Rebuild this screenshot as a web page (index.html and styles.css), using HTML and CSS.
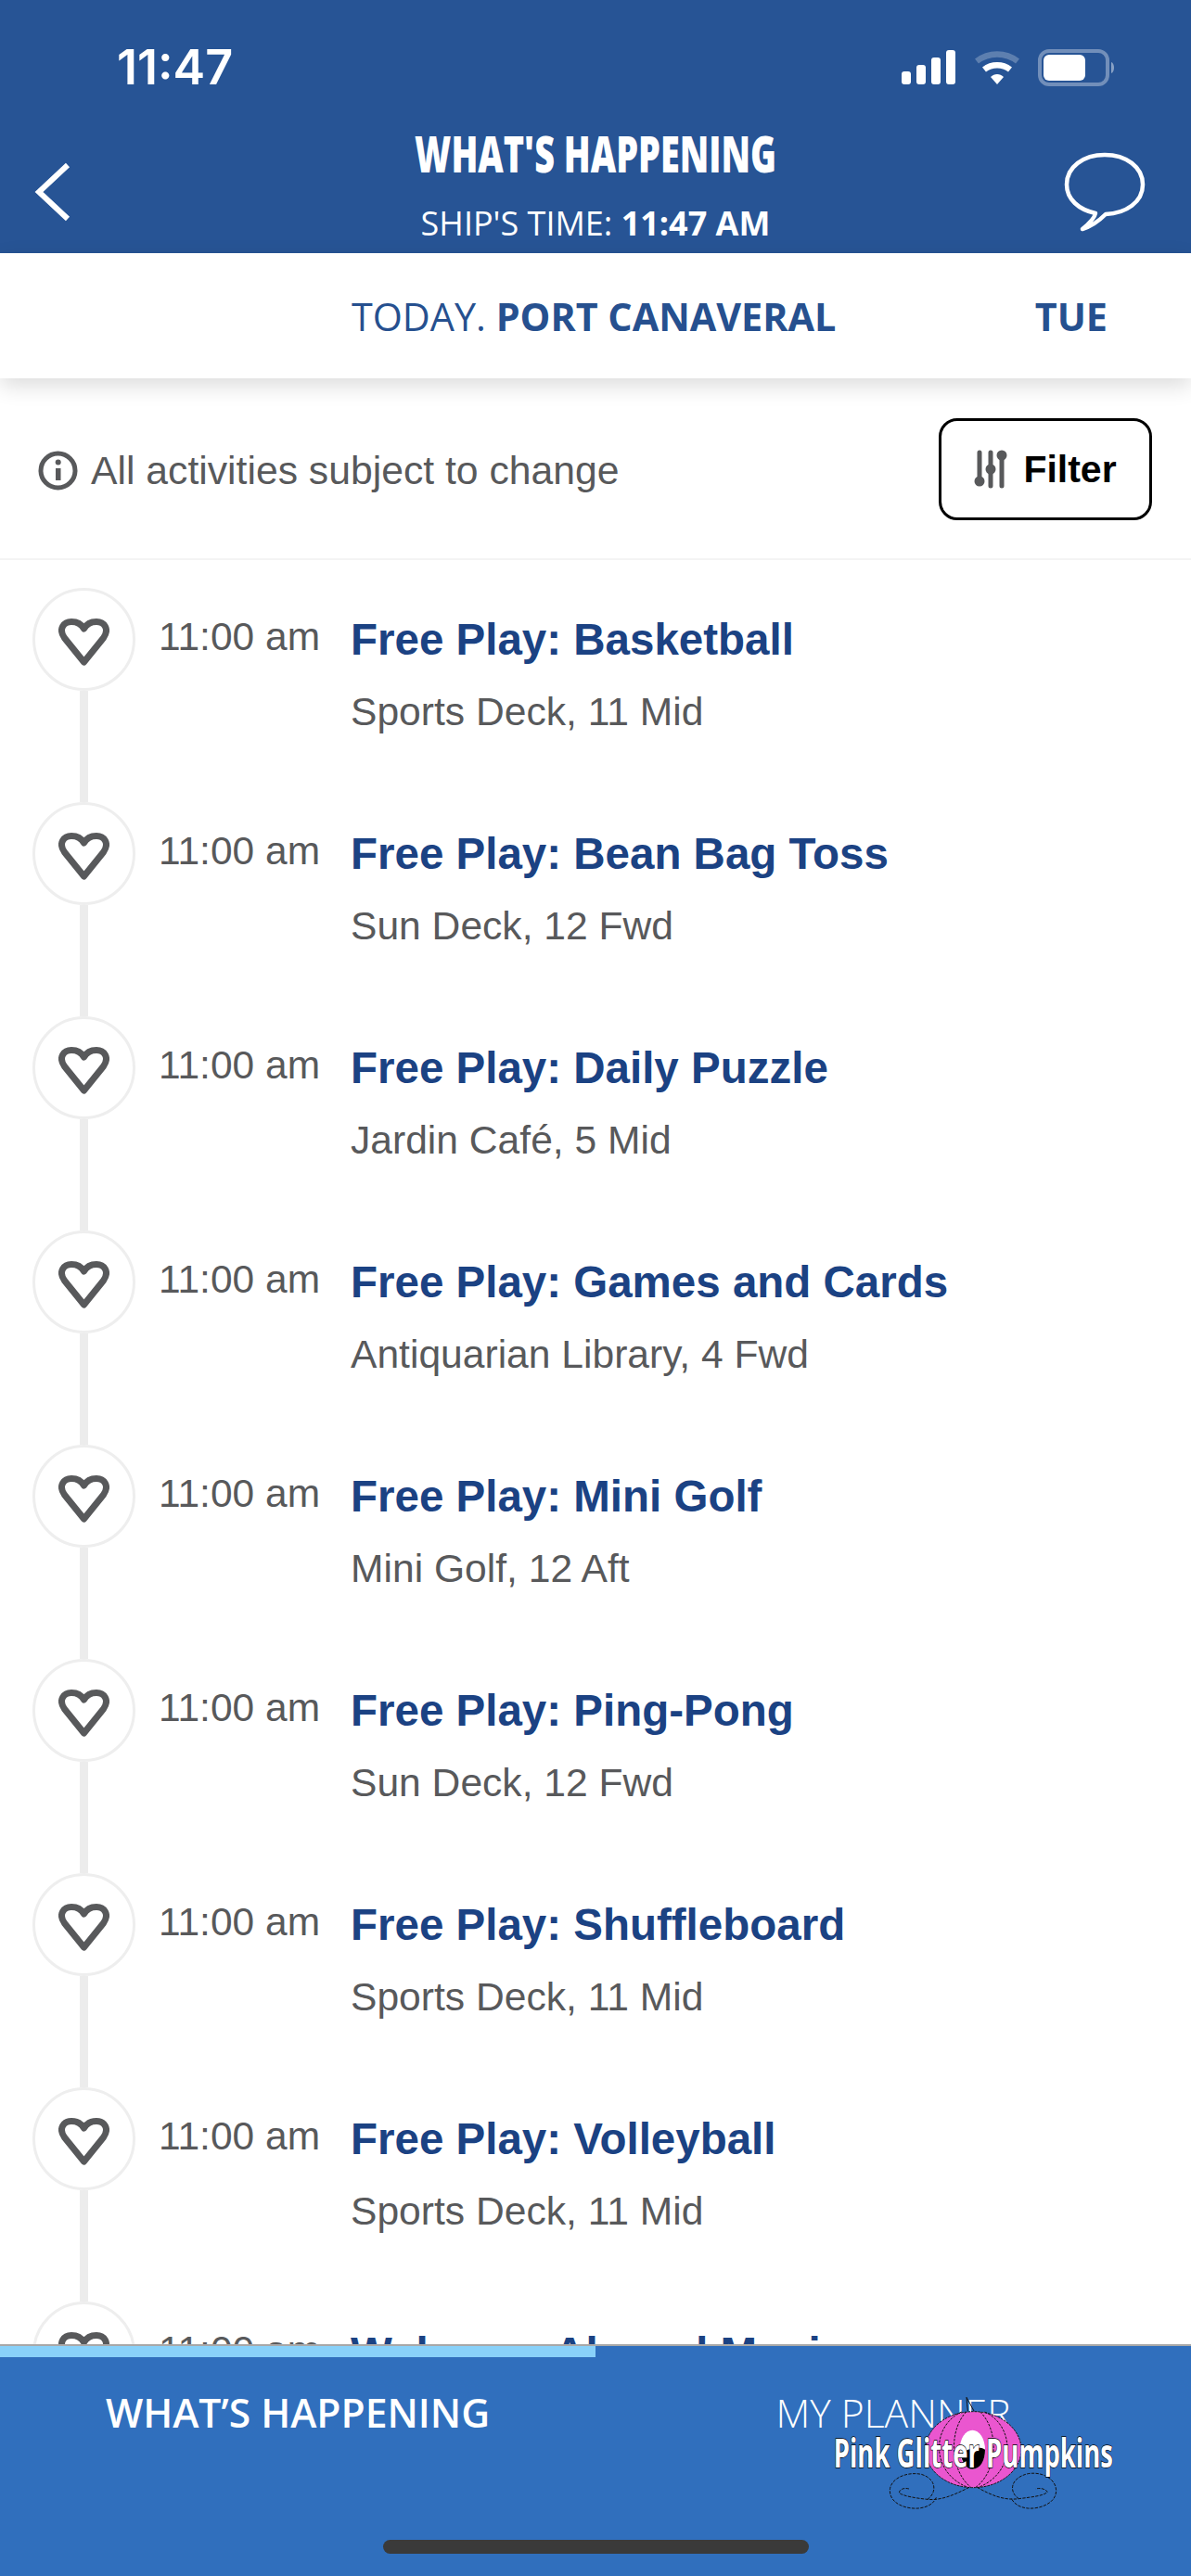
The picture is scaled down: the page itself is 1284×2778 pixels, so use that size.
FILE: index.html
```html
<!DOCTYPE html>
<html lang="en">
<head>
  <meta charset="UTF-8">
  <title>What's Happening</title>
  <link rel="stylesheet" href="styles.css">
</head>
<body>
  <svg class="sprites" width="0" height="0">
    <symbol id="heart" viewBox="0 0 55 51">
      <path d="M27.500 47 L6.500 21 C-0.500 11 6 3.500 14 3.500 C20 3.500 25 6.500 27.500 11 C30 6.500 35 3.500 41 3.500 C49 3.500 55.500 11 48.500 21 Z" fill="none" stroke="#58595b" stroke-width="7" stroke-linejoin="round"/>
    </symbol>
  </svg>

  <div class="app">
    <header class="top">
      <div class="status">
        <span class="clock">11:47</span>
        <svg class="status-icons" width="232" height="42" viewBox="0 0 232 42">
          <rect x="0" y="25" width="10" height="14" rx="3" fill="#fff"/>
          <rect x="16" y="18" width="10" height="21" rx="3" fill="#fff"/>
          <rect x="32" y="10" width="10" height="29" rx="3" fill="#fff"/>
          <rect x="48" y="2" width="10" height="37" rx="3" fill="#fff"/>
          <path d="M81 14 A36 36 0 0 1 125 14" fill="none" stroke="#fff" stroke-opacity="0.25" stroke-width="6.500"/>
          <path d="M89 23 A23 23 0 0 1 117 23" fill="none" stroke="#fff" stroke-width="6.500"/>
          <path d="M96 31 C100 27 106 27 110 31 L103 39 Z" fill="#fff"/>
          <rect x="149" y="3" width="73" height="36" rx="10" fill="none" stroke="#fff" stroke-opacity="0.35" stroke-width="4"/>
          <rect x="153" y="7" width="45" height="28" rx="6" fill="#fff"/>
          <path d="M226 15 C230 16 230 26 226 27 Z" fill="#fff" fill-opacity="0.45"/>
        </svg>
      </div>
      <div class="nav">
        <svg class="back" width="40" height="64" viewBox="0 0 40 64">
          <path d="M36 3 L5 32 L36 61" fill="none" stroke="#fff" stroke-width="6"/>
        </svg>
        <div class="nav-title">
          <h1>WHAT'S HAPPENING</h1>
          <p>SHIP'S TIME: <b>11:47 AM</b></p>
        </div>
        <svg class="chat" width="88" height="86" viewBox="0 0 88 86">
          <path d="M34 66 C16 62 3 51 3 35 C3 16 21 3 44 3 C67 3 85 16 85 35 C85 54 67 66 45 67 C38 74 30 80 20 83 C26 78 33 72 34 66 Z" fill="none" stroke="#fff" stroke-width="4.500" stroke-linejoin="round"/>
        </svg>
      </div>
    </header>

    <nav class="days">
      <span class="day-current">TODAY. <b>PORT CANAVERAL</b></span>
      <b class="day-next">TUE</b>
    </nav>

    <div class="notice">
      <div class="notice-text">
        <svg width="43" height="43" viewBox="0 0 43 43">
          <circle cx="21.500" cy="21.500" r="18.500" fill="none" stroke="#58595b" stroke-width="5"/>
          <rect x="19" y="19" width="5.500" height="13" fill="#58595b"/>
          <circle cx="21.700" cy="12.500" r="3" fill="#58595b"/>
        </svg>
        <span>All activities subject to change</span>
      </div>
      <button class="filter">
        <svg width="36" height="42" viewBox="0 0 36 42">
          <path d="M6 3 V32 M18 3 V39 M30 8 V39" stroke="#58595b" stroke-width="5" stroke-linecap="round"/>
          <circle cx="6" cy="34" r="5.500" fill="#58595b"/>
          <circle cx="18" cy="21" r="5.500" fill="#58595b"/>
          <circle cx="30" cy="6" r="5.500" fill="#58595b"/>
        </svg>
        Filter
      </button>
    </div>

    <main class="list">
      <div class="item">
        <div class="rail"><span class="fav"><svg width="55" height="51"><use href="#heart"/></svg></span><i class="line"></i></div>
        <span class="time">11:00 am</span>
        <div class="info"><h3>Free Play: Basketball</h3><p>Sports Deck, 11 Mid</p></div>
      </div>
      <div class="item">
        <div class="rail"><span class="fav"><svg width="55" height="51"><use href="#heart"/></svg></span><i class="line"></i></div>
        <span class="time">11:00 am</span>
        <div class="info"><h3>Free Play: Bean Bag Toss</h3><p>Sun Deck, 12 Fwd</p></div>
      </div>
      <div class="item">
        <div class="rail"><span class="fav"><svg width="55" height="51"><use href="#heart"/></svg></span><i class="line"></i></div>
        <span class="time">11:00 am</span>
        <div class="info"><h3>Free Play: Daily Puzzle</h3><p>Jardin Café, 5 Mid</p></div>
      </div>
      <div class="item">
        <div class="rail"><span class="fav"><svg width="55" height="51"><use href="#heart"/></svg></span><i class="line"></i></div>
        <span class="time">11:00 am</span>
        <div class="info"><h3>Free Play: Games and Cards</h3><p>Antiquarian Library, 4 Fwd</p></div>
      </div>
      <div class="item">
        <div class="rail"><span class="fav"><svg width="55" height="51"><use href="#heart"/></svg></span><i class="line"></i></div>
        <span class="time">11:00 am</span>
        <div class="info"><h3>Free Play: Mini Golf</h3><p>Mini Golf, 12 Aft</p></div>
      </div>
      <div class="item">
        <div class="rail"><span class="fav"><svg width="55" height="51"><use href="#heart"/></svg></span><i class="line"></i></div>
        <span class="time">11:00 am</span>
        <div class="info"><h3>Free Play: Ping-Pong</h3><p>Sun Deck, 12 Fwd</p></div>
      </div>
      <div class="item">
        <div class="rail"><span class="fav"><svg width="55" height="51"><use href="#heart"/></svg></span><i class="line"></i></div>
        <span class="time">11:00 am</span>
        <div class="info"><h3>Free Play: Shuffleboard</h3><p>Sports Deck, 11 Mid</p></div>
      </div>
      <div class="item">
        <div class="rail"><span class="fav"><svg width="55" height="51"><use href="#heart"/></svg></span><i class="line"></i></div>
        <span class="time">11:00 am</span>
        <div class="info"><h3>Free Play: Volleyball</h3><p>Sports Deck, 11 Mid</p></div>
      </div>
      <div class="item">
        <div class="rail"><span class="fav"><svg width="55" height="51"><use href="#heart"/></svg></span><i class="line"></i></div>
        <span class="time">11:00 am</span>
        <div class="info"><h3>Welcome Aboard Music</h3></div>
      </div>
    </main>

    <footer class="tabs">
      <i class="tab-marker"></i>
      <div class="tab-row">
        <span class="tab tab-active">WHAT’S HAPPENING</span>
        <span class="tab">MY PLANNER</span>
      </div>
      <i class="home-bar"></i>
    </footer>

    <!-- watermark sits on top of the tab bar -->
    <svg class="stamp" width="360" height="240" viewBox="0 0 1080 720">
      <path d="M550 300 C548 285 547 270 546 256 C552 268 562 285 570 300" fill="none" stroke="#111" stroke-width="3"/>
      <ellipse cx="568" cy="425" rx="155" ry="123" fill="#ea56cf" stroke="#111" stroke-width="3" stroke-dasharray="8 3"/>
      <g fill="none" stroke="#111" stroke-width="3" stroke-dasharray="8 4">
        <path d="M530 303 C430 350 430 500 550 547"/>
        <path d="M545 303 C490 360 490 490 560 547"/>
        <path d="M590 303 C650 360 650 490 576 547"/>
        <path d="M605 303 C705 350 705 500 585 547"/>
      </g>
      <ellipse cx="565" cy="425" rx="41" ry="63" fill="#fff"/>
      <path d="M527 440 C560 415 590 415 606 425 C606 460 590 488 565 488 C545 488 532 465 527 440 Z" fill="#000"/>
      <g fill="none" stroke="#111" stroke-width="3" stroke-dasharray="10 4">
        <path d="M555 547 C500 575 460 590 420 586 C380 582 340 575 328 565 C330 552 345 548 360 552"/>
        <path d="M420 586 C450 565 450 520 400 505 C350 495 298 520 298 558 C298 600 350 618 390 615 C420 612 440 600 448 580"/>
        <path d="M580 547 C630 575 670 590 715 584 C760 578 795 575 808 562 C800 552 785 548 770 552"/>
        <path d="M715 584 C680 560 690 515 745 503 C790 495 836 520 836 558 C836 600 780 618 745 615 C715 612 700 600 690 582"/>
      </g>
      <text class="stamp-text" x="116" y="482" textLength="904" lengthAdjust="spacingAndGlyphs">Pink Glitter Pumpkins</text>
    </svg>
  </div>
</body>
</html>
```

FILE: styles.css
```css
* {
  box-sizing: border-box;
}

body {
  margin: 0;
  background: #fff;
  font-family: "Liberation Sans", Arial, sans-serif;
}

.sprites {
  position: absolute;
}

.app {
  position: relative;
  width: 1284px;
  height: 2778px;
  display: flex;
  flex-direction: column;
  overflow: hidden;
}

/* blue header */
.top {
  height: 273px;
  background: #275495;
  color: #fff;
}

.status {
  height: 100px;
  padding: 50px 60px 0 126px;
  display: flex;
  justify-content: space-between;
  align-items: flex-start;
}

.clock {
  font-family: Inter, sans-serif;
  font-size: 52px;
  font-weight: 600;
  line-height: 46px;
}

.status-icons {
  margin-top: 2px;
  margin-right: 20px;
}

.nav {
  height: 173px;
  padding: 0 37px;
  display: grid;
  grid-template-columns: 1fr 388px 1fr;
  align-items: start;
}

.back {
  margin-top: 75px;
}

.chat {
  margin-top: 64px;
  margin-right: 12px;
  justify-self: end;
}

.nav-title {
  text-align: center;
  font-family: "Open Sans", sans-serif;
}

.nav-title h1 {
  margin: 35px 0 0;
  font-size: 54px;
  line-height: 60px;
  font-weight: 800;
  transform: scaleX(0.7);
  white-space: nowrap;
  display: flex;
  justify-content: center;
}

.nav-title p {
  margin: 26px -20px 0;
  font-size: 36px;
  line-height: 40px;
  white-space: nowrap;
}

/* day strip */
.days {
  height: 135px;
  padding: 0 90px 0 379px;
  display: flex;
  justify-content: space-between;
  align-items: center;
  font-family: "Open Sans", sans-serif;
  font-size: 41.300px;
  color: #26508f;
  background: #fff;
  box-shadow: 0 8px 22px rgba(0, 0, 0, 0.14);
  position: relative;
  white-space: nowrap;
}

.notice {
  height: 196px;
  padding: 44px 42px 42px 41px;
  display: flex;
  justify-content: space-between;
  align-items: center;
  border-bottom: 2px solid #f4f4f4;
}

.notice-text {
  display: flex;
  align-items: center;
  gap: 14px;
  margin-top: 2px;
  font-size: 42.700px;
  color: #58595b;
}

.filter {
  width: 230px;
  height: 110px;
  display: flex;
  align-items: center;
  justify-content: center;
  gap: 17px;
  background: #fff;
  border: 3px solid #000;
  border-radius: 20px;
  font-family: "Liberation Sans", Arial, sans-serif;
  font-size: 41px;
  font-weight: 700;
  color: #000;
}

/* schedule */
.list {
  flex: 1;
  min-height: 0;
  overflow: hidden;
  padding: 30px 0 0 35px;
}

.item {
  height: 231px;
  display: flex;
}

.rail {
  width: 111px;
  display: flex;
  flex-direction: column;
  align-items: center;
  flex: none;
}

.fav {
  width: 111px;
  height: 111px;
  flex: none;
  display: flex;
  align-items: center;
  justify-content: center;
  padding-top: 6px;
  border: 3px solid #eeeeee;
  border-radius: 50%;
}

.line {
  width: 9px;
  flex: 1;
  background: #ececec;
}

.time {
  width: 207px;
  margin-left: 25px;
  padding-top: 29px;
  font-size: 42.500px;
  line-height: 48px;
  color: #58595b;
  white-space: nowrap;
}

.info h3 {
  margin: 28px 0 0;
  font-size: 47.500px;
  line-height: 56px;
  color: #1b4283;
}

.info p {
  margin: 25px 0 0;
  font-size: 42.600px;
  line-height: 48px;
  color: #58595b;
}

/* bottom tabs */
.tabs {
  height: 250px;
  background: #306fbd;
  border-top: 2px solid #a8a8a8;
  display: flex;
  flex-direction: column;
}

.tab-marker {
  display: block;
  width: 642px;
  height: 12px;
  background: #89d1f9;
}

.tab-row {
  display: grid;
  grid-template-columns: 642px 642px;
  padding-top: 31px;
  font-family: "Open Sans", sans-serif;
  font-size: 42.600px;
  line-height: 56px;
  color: #fff;
  text-align: center;
}

.tab {
  font-weight: 300;
}

.tab-active {
  font-weight: 600;
}

.home-bar {
  display: block;
  width: 459px;
  height: 15px;
  margin: 110px auto 0;
  border-radius: 8px;
  background: #3a3a3a;
}

.stamp {
  position: absolute;
  left: 860px;
  top: 2500px;
}

.stamp-text {
  font-family: "Open Sans", sans-serif;
  font-weight: 700;
  font-size: 128px;
  fill: #fff;
  stroke: #000;
  stroke-width: 4px;
  paint-order: stroke;
}
```
